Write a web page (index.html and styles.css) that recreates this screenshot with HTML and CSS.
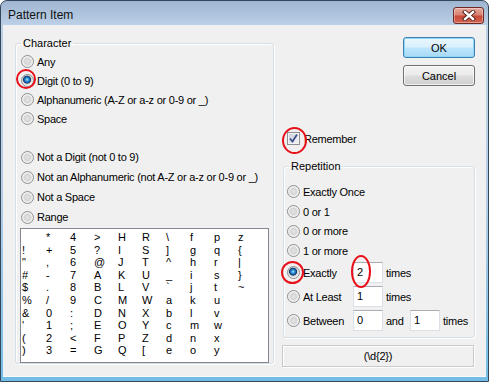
FILE: index.html
```html
<!DOCTYPE html>
<html lang="en">
<head>
    <meta charset="UTF-8">
    <meta name="viewport" content="width=device-width, initial-scale=1.0">
    <title>Pattern Item</title>
    <link rel="stylesheet" href="styles.css">
</head>
<body>
<div class="window">
    <div class="titlebar">
        <span class="title">Pattern Item</span>
        <button class="close" type="button" aria-label="Close">
            <svg width="14" height="11" viewBox="0 0 14 11">
                <path d="M3 2 L11 9 M11 2 L3 9" stroke="#4a1a14" stroke-width="4.2" stroke-linecap="square"/>
                <path d="M3 2 L11 9 M11 2 L3 9" stroke="#fff" stroke-width="2.4" stroke-linecap="square"/>
            </svg>
        </button>
    </div>

    <div class="client">
        <fieldset class="group character">
            <legend>Character</legend>
            <div class="options">
                <label class="opt"><input class="radio" type="radio" name="ch">Any</label>
                <label class="opt"><input class="radio" type="radio" name="ch" checked>Digit (0 to 9)</label>
                <label class="opt"><input class="radio" type="radio" name="ch">Alphanumeric (A-Z or a-z or 0-9 or _)</label>
                <label class="opt"><input class="radio" type="radio" name="ch">Space</label>
            </div>
            <div class="options wide">
                <label class="opt"><input class="radio" type="radio" name="ch">Not a Digit (not 0 to 9)</label>
                <label class="opt"><input class="radio" type="radio" name="ch">Not an Alphanumeric (not A-Z or a-z or 0-9 or _)</label>
                <label class="opt"><input class="radio" type="radio" name="ch">Not a Space</label>
                <label class="opt"><input class="radio" type="radio" name="ch">Range</label>
            </div>
            <div class="charmap">
                <span></span><span>!</span><span>"</span><span>#</span><span>$</span><span>%</span><span>&amp;</span><span>'</span><span>(</span><span>)</span>
                <span>*</span><span>+</span><span>,</span><span>-</span><span>.</span><span>/</span><span>0</span><span>1</span><span>2</span><span>3</span>
                <span>4</span><span>5</span><span>6</span><span>7</span><span>8</span><span>9</span><span>:</span><span>;</span><span>&lt;</span><span>=</span>
                <span>&gt;</span><span>?</span><span>@</span><span>A</span><span>B</span><span>C</span><span>D</span><span>E</span><span>F</span><span>G</span>
                <span>H</span><span>I</span><span>J</span><span>K</span><span>L</span><span>M</span><span>N</span><span>O</span><span>P</span><span>Q</span>
                <span>R</span><span>S</span><span>T</span><span>U</span><span>V</span><span>W</span><span>X</span><span>Y</span><span>Z</span><span>[</span>
                <span>\</span><span>]</span><span>^</span><span>_</span><span>`</span><span>a</span><span>b</span><span>c</span><span>d</span><span>e</span>
                <span>f</span><span>g</span><span>h</span><span>i</span><span>j</span><span>k</span><span>l</span><span>m</span><span>n</span><span>o</span>
                <span>p</span><span>q</span><span>r</span><span>s</span><span>t</span><span>u</span><span>v</span><span>w</span><span>x</span><span>y</span>
                <span>z</span><span>{</span><span>|</span><span>}</span><span>~</span>
            </div>
        </fieldset>

        <div class="side">
            <div class="buttons">
                <button class="btn default" type="button">OK</button>
                <button class="btn" type="button">Cancel</button>
            </div>

            <label class="check">
                <span class="checkbox">
                    <svg width="11" height="11" viewBox="0 0 11 11">
                        <path d="M2 5.5 L4.5 8.5 L9 1.5" fill="none" stroke="#3d4f8a" stroke-width="1.8"/>
                    </svg>
                </span>
                Remember
            </label>

            <fieldset class="group repetition">
                <legend>Repetition</legend>
                <label class="opt"><input class="radio" type="radio" name="rep">Exactly Once</label>
                <label class="opt"><input class="radio" type="radio" name="rep">0 or 1</label>
                <label class="opt"><input class="radio" type="radio" name="rep">0 or more</label>
                <label class="opt"><input class="radio" type="radio" name="rep">1 or more</label>
                <div class="opt field">
                    <input class="radio" type="radio" name="rep" checked>
                    <span class="lbl">Exactly</span>
                    <input class="num" type="text" value="2">
                    <span>times</span>
                </div>
                <div class="opt field">
                    <input class="radio" type="radio" name="rep">
                    <span class="lbl">At Least</span>
                    <input class="num" type="text" value="1">
                    <span>times</span>
                </div>
                <div class="opt field">
                    <input class="radio" type="radio" name="rep">
                    <span class="lbl">Between</span>
                    <input class="num" type="text" value="0">
                    <span class="and">and</span>
                    <input class="num" type="text" value="1">
                    <span>times</span>
                </div>
            </fieldset>

            <div class="result">(\d{2})</div>
        </div>
    </div>

    <!-- red annotation rings -->
    <span class="ring ring-digit"></span>
    <span class="ring ring-remember"></span>
    <span class="ring ring-exactly"></span>
    <span class="ring ring-count"></span>
</div>
</body>
</html>
```

FILE: styles.css
```css
* {
    box-sizing: border-box;
}
body {
    margin: 0;
    font-family: "Liberation Sans", Arial, sans-serif;
    font-size: 11px;
    color: #000;
}
.window {
    position: relative;
    width: 489px;
    height: 382px;
    border: 1px solid #34465a;
    border-radius: 7px 7px 0 0;
    background: linear-gradient(#9fb6d2 0, #bcd0e6 24px, #b4cde6 200px, #72bde6 100%);
    display: flex;
    flex-direction: column;
    overflow: hidden;
}
.titlebar {
    height: 24px;
    display: flex;
    align-items: center;
    justify-content: space-between;
    padding: 0 4px 0 7px;
}
.title {
    font-size: 12px;
    margin-top: 3px;
    color: #111;
}
.close {
    width: 31px;
    height: 17px;
    margin-top: 4px;
    padding: 0;
    border: 1px solid #6e2a22;
    border-radius: 3px;
    background: linear-gradient(#e7aa9f 0, #d88273 45%, #c9493a 55%, #d16550 100%);
    box-shadow: inset 0 0 0 1px rgba(255, 255, 255, 0.35);
    display: flex;
    align-items: center;
    justify-content: center;
}
.client {
    flex: 1;
    margin: 0 2px 4px 2px;
    background: #f0f0f0;
    border-bottom: 1px solid #fafafa;
    display: flex;
    gap: 8px;
    padding: 12px 0 0 12px;
    align-items: flex-start;
}
.group {
    margin: 0;
    border: 1px solid #d5dfe5;
    border-radius: 3px;
    box-shadow: 1px 1px 0 #fff, inset 1px 1px 0 #fff;
}
.group legend {
    padding: 0 2px;
    line-height: 13px;
}
.character {
    width: 259px;
    padding: 2px 3px 0 5px;
}
.opt {
    display: flex;
    align-items: center;
    gap: 3px;
    height: 19px;
    letter-spacing: -0.25px;
    white-space: nowrap;
}
.options.wide {
    margin-top: 19px;
}
.options.wide .opt {
    height: 20px;
}
.radio {
    appearance: none;
    -webkit-appearance: none;
    flex: none;
    width: 13px;
    height: 13px;
    margin: 0;
    border: 1px solid #8c8e90;
    border-radius: 50%;
    background: radial-gradient(circle at 50% 50%, #e6e6e6 0, #d4d4d4 3px, #ececec 4.5px, #fbfbfb 6px);
}
.radio:checked {
    background: radial-gradient(circle at 46% 42%, #b6e6fc 0, #3da2e2 1.4px, #10589f 3px, #1b3c66 3.7px, #d2d2d2 4.3px, #f6f6f6 6px);
}
.charmap {
    width: 249px;
    height: 135px;
    margin: 1px 0 0 -1px;
    padding: 2px 0 0 0;
    background: #fff;
    border: 1px solid #828790;
    display: grid;
    grid-auto-flow: column;
    grid-template-rows: repeat(10, 12.6px);
    grid-template-columns: repeat(10, 24px);
    line-height: 12.6px;
}
.charmap span {
    padding-left: 1px;
}
.side {
    width: 193px;
    display: flex;
    flex-direction: column;
}
.buttons {
    align-self: flex-end;
    display: flex;
    flex-direction: column;
    gap: 7px;
}
.btn {
    width: 72px;
    height: 21px;
    padding: 0;
    font-family: "Liberation Sans", Arial, sans-serif;
    font-size: 11px;
    color: #000;
    border: 1px solid #707070;
    border-radius: 3px;
    background: linear-gradient(#f3f3f3 0, #ebebeb 48%, #dddddd 52%, #cfcfcf 100%);
    box-shadow: inset 0 0 0 1px rgba(255, 255, 255, 0.7);
}
.btn.default {
    border-color: #3c7fb1;
    background: linear-gradient(#eaf6fd 0, #d9f0fc 48%, #bee6fd 52%, #a7d9f5 100%);
    box-shadow: inset 0 0 0 1px #8fd8fb;
}
.check {
    display: flex;
    align-items: center;
    gap: 4px;
    height: 13px;
    margin: 46px 0 0 5px;
    letter-spacing: -0.25px;
}
.checkbox {
    width: 13px;
    height: 13px;
    border: 1px solid #8f8f8f;
    background: linear-gradient(135deg, #c9cfd8, #f4f5f7);
    box-shadow: inset 0 0 0 1px #f4f4f4;
    display: flex;
    align-items: center;
    justify-content: center;
}
.repetition {
    width: 192px;
    margin: 15px 0 0 1px;
    padding: 9px 3px 4px 3px;
}
.repetition legend {
    margin-left: 2px;
}
.repetition .opt {
    height: 19.7px;
}
.repetition .opt.field {
    height: 24px;
}
.lbl {
    width: 47px;
}
.and {
    width: 21px;
}
.num {
    width: 30px;
    height: 21px;
    margin: 0;
    padding: 0 0 2px 3px;
    font-family: "Liberation Sans", Arial, sans-serif;
    font-size: 11px;
    border: 1px solid #dbdfe6;
    border-top-color: #abadb3;
    background: #fff;
}
.result {
    width: 192px;
    height: 22px;
    margin-top: 7px;
    border: 1px solid #c9c9c9;
    box-shadow: inset 1px 1px 0 #fff, 1px 1px 0 #fff;
    display: flex;
    align-items: center;
    justify-content: center;
    letter-spacing: -0.2px;
}
.ring {
    position: absolute;
    border: 2px solid #e8101a;
    border-radius: 50%;
    pointer-events: none;
}
.ring-digit {
    left: 15px;
    top: 68px;
    width: 20px;
    height: 20px;
}
.ring-remember {
    left: 281px;
    top: 126px;
    width: 25px;
    height: 27px;
}
.ring-exactly {
    left: 280px;
    top: 260px;
    width: 23px;
    height: 23px;
}
.ring-count {
    left: 350px;
    top: 254px;
    width: 20px;
    height: 33px;
}
```
